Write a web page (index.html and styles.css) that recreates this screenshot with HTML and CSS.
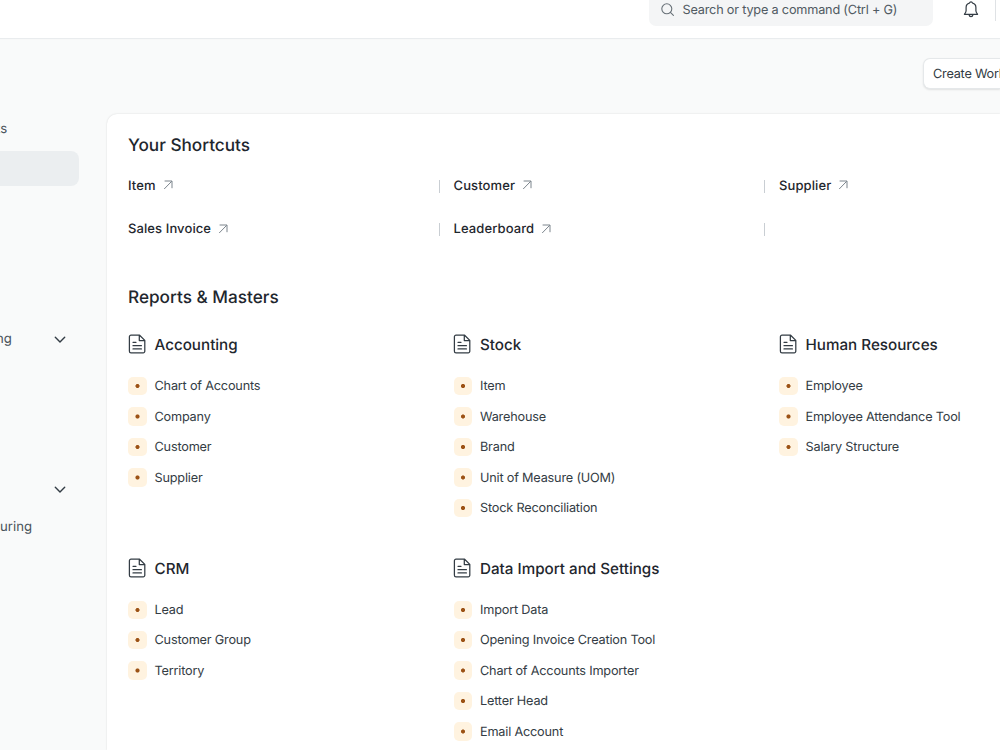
FILE: index.html
```html
<!DOCTYPE html>
<html lang="en">
<head>
<meta charset="utf-8">
<title>Home</title>
<link rel="stylesheet" href="styles.css">
</head>
<body>
<svg class="defs" width="0" height="0">
  <symbol id="arrow" viewBox="0 0 10 10"><path d="M1.2 9 8.8 1.2M1.6 1H9v7.2" fill="none" stroke="currentColor" stroke-width="1"/></symbol>
  <symbol id="doc" viewBox="0 0 18 20"><path d="M3 1.2h8.6l5.2 5.2v10.8a1.6 1.6 0 0 1-1.6 1.6H3a1.6 1.6 0 0 1-1.6-1.6V2.8A1.6 1.6 0 0 1 3 1.2ZM11.3 1.4v5.2h5.3M5 8.3h3M5 11.7h8.4M5 14.9h8.4" fill="none" stroke="currentColor" stroke-width="1.25" stroke-linecap="round" stroke-linejoin="round"/></symbol>
  <symbol id="chevron" viewBox="0 0 12 8"><path d="m1.3 1.2 4.7 4.7 4.7-4.7" fill="none" stroke="currentColor" stroke-width="1.4" stroke-linecap="round" stroke-linejoin="round"/></symbol>
</svg>
<header class="navbar">
  <div class="search">
    <svg class="search-icon" viewBox="0 0 13 13"><circle cx="5.8" cy="5.8" r="5" fill="none" stroke="currentColor" stroke-width="1.1"/><path d="m9.4 9.4 3 3" stroke="currentColor" stroke-width="1.1" stroke-linecap="round"/></svg>
    <span>Search or type a command (Ctrl + G)</span>
  </div>
  <svg class="bell" viewBox="0 0 16 17"><path d="M1.4 13.3h13.2c-1-1.2-1.7-2-1.7-3.6V6.500c0-2.500-1.500-4-3.300-4.400a1.700 1.700 0 0 0-3.200 0C4.600 2.500 3.100 4 3.100 6.500v3.200c0 1.600-.7 2.400-1.700 3.600ZM6 13.600c.2 1.300 1 2 2 2s1.800-.7 2-2" fill="none" stroke="currentColor" stroke-width="1.2" stroke-linejoin="round" stroke-linecap="round"/></svg>
  <span class="nav-divider"></span>
</header>
<div class="page-head"><button class="create">Create Workspace</button></div>
<main class="page">
  <aside class="sidebar">
    <div class="side-item cut-s"><span>ts</span></div>
    <div class="side-item selected"></div>
    <div class="side-item nested cut-ng"><span>ng</span><svg class="chevron"><use href="#chevron"/></svg></div>
    <div class="side-item nested second"><svg class="chevron"><use href="#chevron"/></svg></div>
    <div class="side-item cut-uring"><span>uring</span></div>
  </aside>
  <section class="card">
    <h2>Your Shortcuts</h2>
    <div class="shortcuts">
      <a class="shortcut">Item<svg><use href="#arrow"/></svg></a>
      <a class="shortcut">Customer<svg><use href="#arrow"/></svg></a>
      <a class="shortcut last">Supplier<svg><use href="#arrow"/></svg></a>
      <a class="shortcut">Sales Invoice<svg><use href="#arrow"/></svg></a>
      <a class="shortcut">Leaderboard<svg><use href="#arrow"/></svg></a>
    </div>
    <h2>Reports &amp; Masters</h2>
    <div class="masters">
      <div class="group"><h3><svg><use href="#doc"/></svg>Accounting</h3>
        <ul><li>Chart of Accounts</li><li>Company</li><li>Customer</li><li>Supplier</li></ul></div>
      <div class="group"><h3><svg><use href="#doc"/></svg>Stock</h3>
        <ul><li>Item</li><li>Warehouse</li><li>Brand</li><li>Unit of Measure (UOM)</li><li>Stock Reconciliation</li></ul></div>
      <div class="group"><h3><svg><use href="#doc"/></svg>Human Resources</h3>
        <ul><li>Employee</li><li>Employee Attendance Tool</li><li>Salary Structure</li></ul></div>
      <div class="group"><h3><svg><use href="#doc"/></svg>CRM</h3>
        <ul><li>Lead</li><li>Customer Group</li><li>Territory</li></ul></div>
      <div class="group"><h3><svg><use href="#doc"/></svg>Data Import and Settings</h3>
        <ul><li>Import Data</li><li>Opening Invoice Creation Tool</li><li>Chart of Accounts Importer</li><li>Letter Head</li><li>Email Account</li></ul></div>
    </div>
  </section>
</main>
</body>
</html>
```
FILE: styles.css
```css
* { box-sizing: border-box; }
html { overflow: hidden; }
body {
  margin: 0;
  width: 1000px;
  height: 750px;
  overflow: hidden;
  background: #f9fafa;
  color: #333c44;
  font: 12.7px/20px Inter, sans-serif;
  letter-spacing: -.19px;
  text-rendering: geometricPrecision;
}
.defs { position: absolute; }
.navbar {
  display: flex;
  align-items: flex-start;
  height: 38px;
  padding-left: 649px;
  background: #fff;
  box-shadow: 0 1px 1px #e9ecee;
}
.search {
  display: flex;
  flex: none;
  width: 284px;
  height: 26px;
  padding-left: 12px;
  background: #f4f5f6;
  border-radius: 0 0 7px 7px;
  color: #505a62;
}
.search span { padding-top: 1px; }
.search-icon { width: 13px; height: 13px; margin: 3px 8.5px 0 0; color: #687178; }
.bell { flex: none; width: 16px; height: 17px; margin: 1px 0 0 30px; color: #333c44; }
.nav-divider { flex: none; width: 1px; height: 21px; margin-left: 16px; background: #dfe2e5; }
.page-head { display: flex; height: 75.5px; padding: 20px 0 0 922.5px; }
.create {
  flex: none;
  width: 77.5px;
  height: 31px;
  padding: 2px 0 0 9.5px;
  overflow: hidden;
  white-space: nowrap;
  border: 1px solid #e5e8ea;
  border-right: 0;
  border-radius: 7px 0 0 7px;
  background: #fff;
  box-shadow: 0 1px 2px #0000001a;
  color: #333c44;
  font: inherit;
  letter-spacing: -.22px;
  text-rendering: inherit;
  text-align: left;
}
.page { display: flex; }
.sidebar { flex: none; width: 107px; overflow: hidden; color: #4a535b; font-size: 13.2px; letter-spacing: 0; }
.side-item { display: flex; align-items: center; width: 79px; height: 35px; }
.cut-s { margin: -3px 0 5.5px -4px; padding-top: 1px; }
.selected { margin-bottom: 135px; background: #ebeef0; border-radius: 0 8px 8px 0; }
.nested { justify-content: space-between; padding-right: 13px; }
.chevron { width: 12px; height: 8px; margin-top: 3px; color: #333c44; }
.cut-ng { margin-left: -4px; width: 83px; }
.second { justify-content: flex-end; margin: 115px 0 2px; }
.cut-uring { padding-top: 2px; }
.card {
  flex: none;
  width: 893px;
  height: 636.5px;
  padding: 21px 0 0 21px;
  background: #fff;
  border-radius: 10px 0 0 0;
  box-shadow: 0 0 2px #00000024;
}
h2 { margin: 0; font-size: 17.2px; font-weight: 500; line-height: 22px; letter-spacing: 0; color: #1f272e; }
.shortcuts {
  display: grid;
  grid-template-columns: repeat(3, 325.5px);
  grid-auto-rows: 43.5px;
  margin: 19px 0 24px;
}
.shortcut {
  display: flex;
  align-items: center;
  height: 20px;
  width: 311.5px;
  border-right: 1px solid #c9ced3;
  border-image: linear-gradient(transparent 4px, #c9ced3 4px, #c9ced3 17px, transparent 17px) 0 1 0 0;
  color: #1f272e;
  font-size: 13px;
  font-weight: 500;
  letter-spacing: .1px;
}
.shortcut svg { width: 10px; height: 10px; margin: -1px 0 0 7px; color: #7c858d; }
.shortcut.last { border: 0; }
.masters { display: grid; grid-template-columns: repeat(3, 325.5px); grid-template-rows: 223.7px 240px; padding-top: 26.4px; }
h3 { display: flex; align-items: center; gap: 9px; height: 20px; margin: 0 0 16.2px; font-size: 15.2px; font-weight: 500; letter-spacing: 0; color: #1f272e; }
h3 svg { width: 18px; height: 20px; margin: -1px 0 0 -.5px; color: #333c44; }
ul { margin: 0; padding: 0; list-style: none; }
li { display: flex; align-items: center; gap: 8px; height: 30.43px; padding-top: 2px; }
li::before {
  content: "";
  width: 18.5px;
  height: 18.5px;
  margin-top: -2.4px;
  border-radius: 5px;
  background: radial-gradient(circle at center, #9c5215 1.6px, #fff3e0 2.5px);
}
```
